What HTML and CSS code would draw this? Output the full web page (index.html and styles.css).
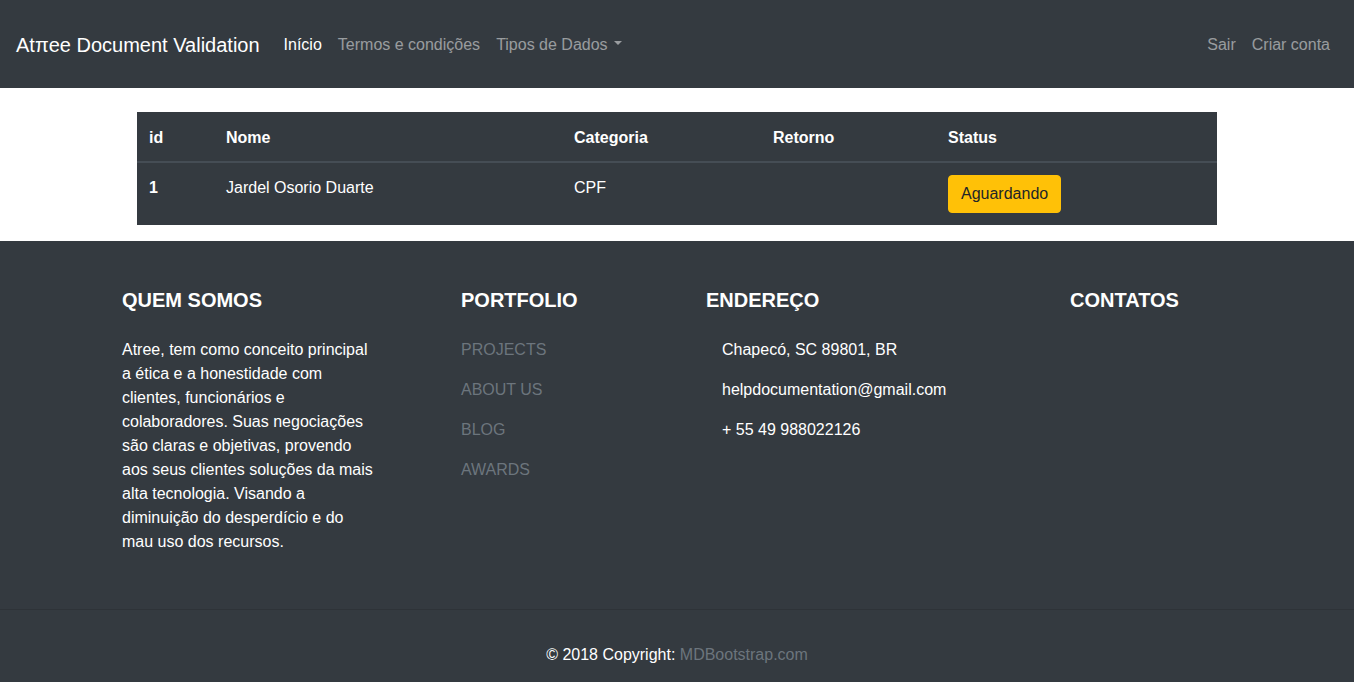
FILE: index.html
```html
<!DOCTYPE html>
<html lang="pt-BR">
<head>
<meta charset="utf-8">
<title>Atree Document Validation</title>
<link rel="stylesheet" href="styles.css">
</head>
<body>
<nav class="navbar">
  <a class="brand" href="#">Atπee Document Validation</a>
  <ul class="nav">
    <li><a class="nav-link active" href="#">Início</a></li>
    <li><a class="nav-link" href="#">Termos e condições</a></li>
    <li><a class="nav-link dropdown" href="#">Tipos de Dados</a></li>
  </ul>
  <ul class="nav nav-right">
    <li><a class="nav-link" href="#">Sair</a></li>
    <li><a class="nav-link" href="#">Criar conta</a></li>
  </ul>
</nav>

<main class="main">
  <table class="table">
    <thead>
      <tr>
        <th class="c-id">id</th>
        <th class="c-nome">Nome</th>
        <th class="c-cat">Categoria</th>
        <th class="c-ret">Retorno</th>
        <th class="c-status">Status</th>
      </tr>
    </thead>
    <tbody>
      <tr>
        <th>1</th>
        <td>Jardel Osorio Duarte</td>
        <td>CPF</td>
        <td></td>
        <td class="cell-btn"><button class="btn-warning" type="button">Aguardando</button></td>
      </tr>
    </tbody>
  </table>
</main>

<footer class="footer">
  <div class="footer-cols">
    <div class="fcol">
      <h5 class="fhead">QUEM SOMOS</h5>
      <p class="about">Atree, tem como conceito principal a ética e a honestidade com clientes, funcionários e colaboradores. Suas negociações são claras e objetivas, provendo aos seus clientes soluções da mais alta tecnologia. Visando a diminuição do desperdício e do mau uso dos recursos.</p>
    </div>
    <div class="fcol">
      <h5 class="fhead">PORTFOLIO</h5>
      <ul class="flist">
        <li><a href="#">PROJECTS</a></li>
        <li><a href="#">ABOUT US</a></li>
        <li><a href="#">BLOG</a></li>
        <li><a href="#">AWARDS</a></li>
      </ul>
    </div>
    <div class="fcol">
      <h5 class="fhead">ENDEREÇO</h5>
      <ul class="flist addr">
        <li>Chapecó, SC 89801, BR</li>
        <li>helpdocumentation@gmail.com</li>
        <li>+ 55 49 988022126</li>
      </ul>
    </div>
    <div class="fcol">
      <h5 class="fhead">CONTATOS</h5>
    </div>
  </div>
  <div class="copyright">© 2018 Copyright: <a href="#">MDBootstrap.com</a></div>
</footer>
</body>
</html>
```

FILE: styles.css
```css
* { box-sizing: border-box; }

body {
  margin: 0;
  font-family: "Liberation Sans", Arial, sans-serif;
  font-size: 16px;
  line-height: 24px;
  color: #212529;
  background: #fff;
}

a { text-decoration: none; }

.navbar {
  height: 88px;
  background: #343a40;
  display: flex;
  align-items: center;
  padding: 1px 16px 0;
}

.brand {
  color: #fff;
  font-size: 20px;
  line-height: 30px;
  margin-right: 16px;
}

.nav {
  list-style: none;
  margin: 0;
  padding: 0;
  display: flex;
}

.nav-right { margin-left: auto; }

.nav-link {
  display: block;
  padding: 8px;
  color: rgba(255, 255, 255, 0.5);
}

.nav-link.active { color: #fff; }

.dropdown::after {
  content: "";
  display: inline-block;
  margin-left: 0.4em;
  vertical-align: 0.255em;
  border-top: 0.3em solid;
  border-right: 0.3em solid transparent;
  border-left: 0.3em solid transparent;
}

.main {
  padding-top: 24px;
}

.table {
  width: 1080px;
  margin: 0 auto 16px;
  border-collapse: collapse;
  background: #343a40;
  color: #fff;
  table-layout: fixed;
}

.table th,
.table td {
  padding: 13px 12px 11px;
  text-align: left;
  vertical-align: top;
}

.table td.cell-btn {
  padding: 12px;
}

.table thead th {
  border-top: 1px solid #343a40;
  border-bottom: 2px solid #454d55;
}

.c-id { width: 77px; }
.c-nome { width: 348px; }
.c-cat { width: 199px; }
.c-ret { width: 175px; }

.btn-warning {
  font-family: inherit;
  font-size: 16px;
  line-height: 24px;
  padding: 6px 12px;
  border: 1px solid #ffc107;
  border-radius: 4px;
  background: #ffc107;
  color: #212529;
  cursor: pointer;
}

.footer {
  background: #343a40;
  color: #fff;
  padding-top: 47px;
}

.footer-cols {
  width: 1110px;
  margin: 0 auto;
  display: grid;
  grid-template-columns: 339px 245px 364px 1fr;
  padding-bottom: 55px;
}

.fhead {
  margin: 0 0 26px;
  font-size: 20px;
  line-height: 24px;
  font-weight: bold;
}

.about {
  margin: 0;
  width: 254px;
}

.flist {
  list-style: none;
  margin: 0;
  padding: 0;
}

.flist li { margin-bottom: 16px; }

.flist a { color: #6c757d; }

.addr { padding-left: 16px; }

.copyright {
  border-top: 1px solid #2e3338;
  text-align: center;
  padding: 33px 0 32px;
}

.copyright a { color: #6c757d; }
```
